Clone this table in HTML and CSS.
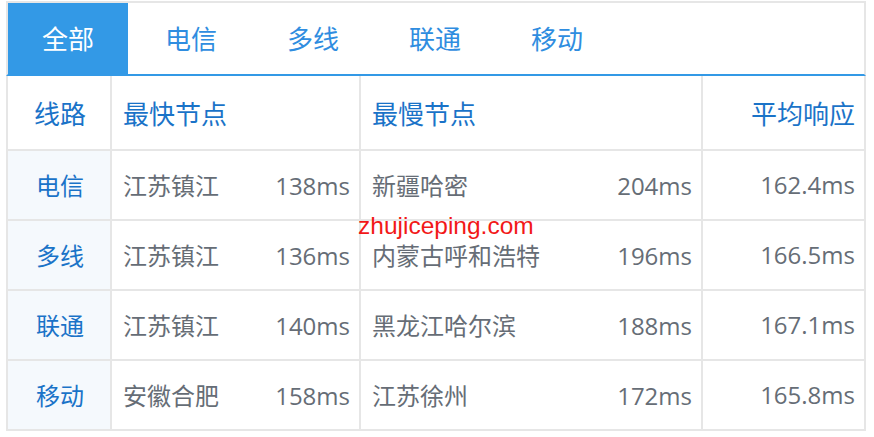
FILE: index.html
```html
<!DOCTYPE html>
<html lang="zh-CN">
<head>
<meta charset="UTF-8">
<title>线路测速</title>
<link rel="stylesheet" href="styles.css">
</head>
<body>

<div class="speed-box">
  <!-- tabs -->
  <ul class="tabs">
    <li class="active">全部</li>
    <li>电信</li>
    <li>多线</li>
    <li>联通</li>
    <li>移动</li>
  </ul>

  <table class="speed-table">
    <colgroup>
      <col class="c-line">
      <col class="c-fast">
      <col class="c-slow">
      <col class="c-avg">
    </colgroup>
    <thead>
      <tr>
        <th class="center">线路</th>
        <th>最快节点</th>
        <th>最慢节点</th>
        <th class="right">平均响应</th>
      </tr>
    </thead>
    <tbody>
      <tr>
        <td class="isp">电信</td>
        <td><div class="node-row"><span>江苏镇江</span><span>138ms</span></div></td>
        <td><div class="node-row"><span>新疆哈密</span><span>204ms</span></div></td>
        <td class="right">162.4ms</td>
      </tr>
      <tr>
        <td class="isp">多线</td>
        <td><div class="node-row"><span>江苏镇江</span><span>136ms</span></div></td>
        <td><div class="node-row"><span>内蒙古呼和浩特</span><span>196ms</span></div></td>
        <td class="right">166.5ms</td>
      </tr>
      <tr>
        <td class="isp">联通</td>
        <td><div class="node-row"><span>江苏镇江</span><span>140ms</span></div></td>
        <td><div class="node-row"><span>黑龙江哈尔滨</span><span>188ms</span></div></td>
        <td class="right">167.1ms</td>
      </tr>
      <tr>
        <td class="isp">移动</td>
        <td><div class="node-row"><span>安徽合肥</span><span>158ms</span></div></td>
        <td><div class="node-row"><span>江苏徐州</span><span>172ms</span></div></td>
        <td class="right">165.8ms</td>
      </tr>
    </tbody>
  </table>

  <div class="watermark">zhujiceping.com</div>
</div>

</body>
</html>
```

FILE: styles.css
```css
/* General styles */
body {
  margin: 0;
  padding: 0;
  background-color: #fff;
  font-family: "Open Sans", "Noto Sans CJK SC", sans-serif;
}

.speed-box {
  position: relative;
  width: 860px;
  margin: 1px 0 0 6px;
}

/* Tabs */
.tabs {
  display: flex;
  list-style: none;
  margin: 0;
  padding: 0;
  border: 2px solid #e6e6e6;
  border-bottom: 2px solid #3399e6;
}

.tabs li {
  width: 122px;
  height: 69px;
  padding-top: 2px;
  line-height: 69px;
  text-align: center;
  font-size: 26px;
  color: #2f8de0;
}

.tabs li.active {
  width: 120px;
  margin-right: 2px;
  background-color: #3399e6;
  color: #fff;
}

/* Table */
.speed-table {
  width: 858px;
  border-collapse: collapse;
  table-layout: fixed;
}

.c-line { width: 104px; }
.c-fast { width: 249px; }
.c-slow { width: 342px; }
.c-avg { width: 163px; }

.speed-table th,
.speed-table td {
  border: 2px solid #e6e6e6;
  padding: 0 9px 0 11px;
  white-space: nowrap;
}

.speed-table th {
  border-top: none;
  height: 73px;
  font-size: 26px;
  font-weight: normal;
  color: #1a73c8;
  text-align: left;
}

.speed-table td {
  height: 66px;
  padding-bottom: 2px;
  font-size: 24px;
  color: #666d76;
}

.node-row {
  display: flex;
  justify-content: space-between;
  align-items: baseline;
}

.speed-table .center {
  text-align: center;
}

.speed-table .right {
  text-align: right;
}

.speed-table td.isp {
  background-color: #f5f9fd;
  color: #1a73c8;
  text-align: center;
}

/* Watermark */
.watermark {
  position: absolute;
  left: 352px;
  top: 211px;
  font-family: "Liberation Sans", sans-serif;
  font-size: 24.5px;
  color: #f21818;
}
```
